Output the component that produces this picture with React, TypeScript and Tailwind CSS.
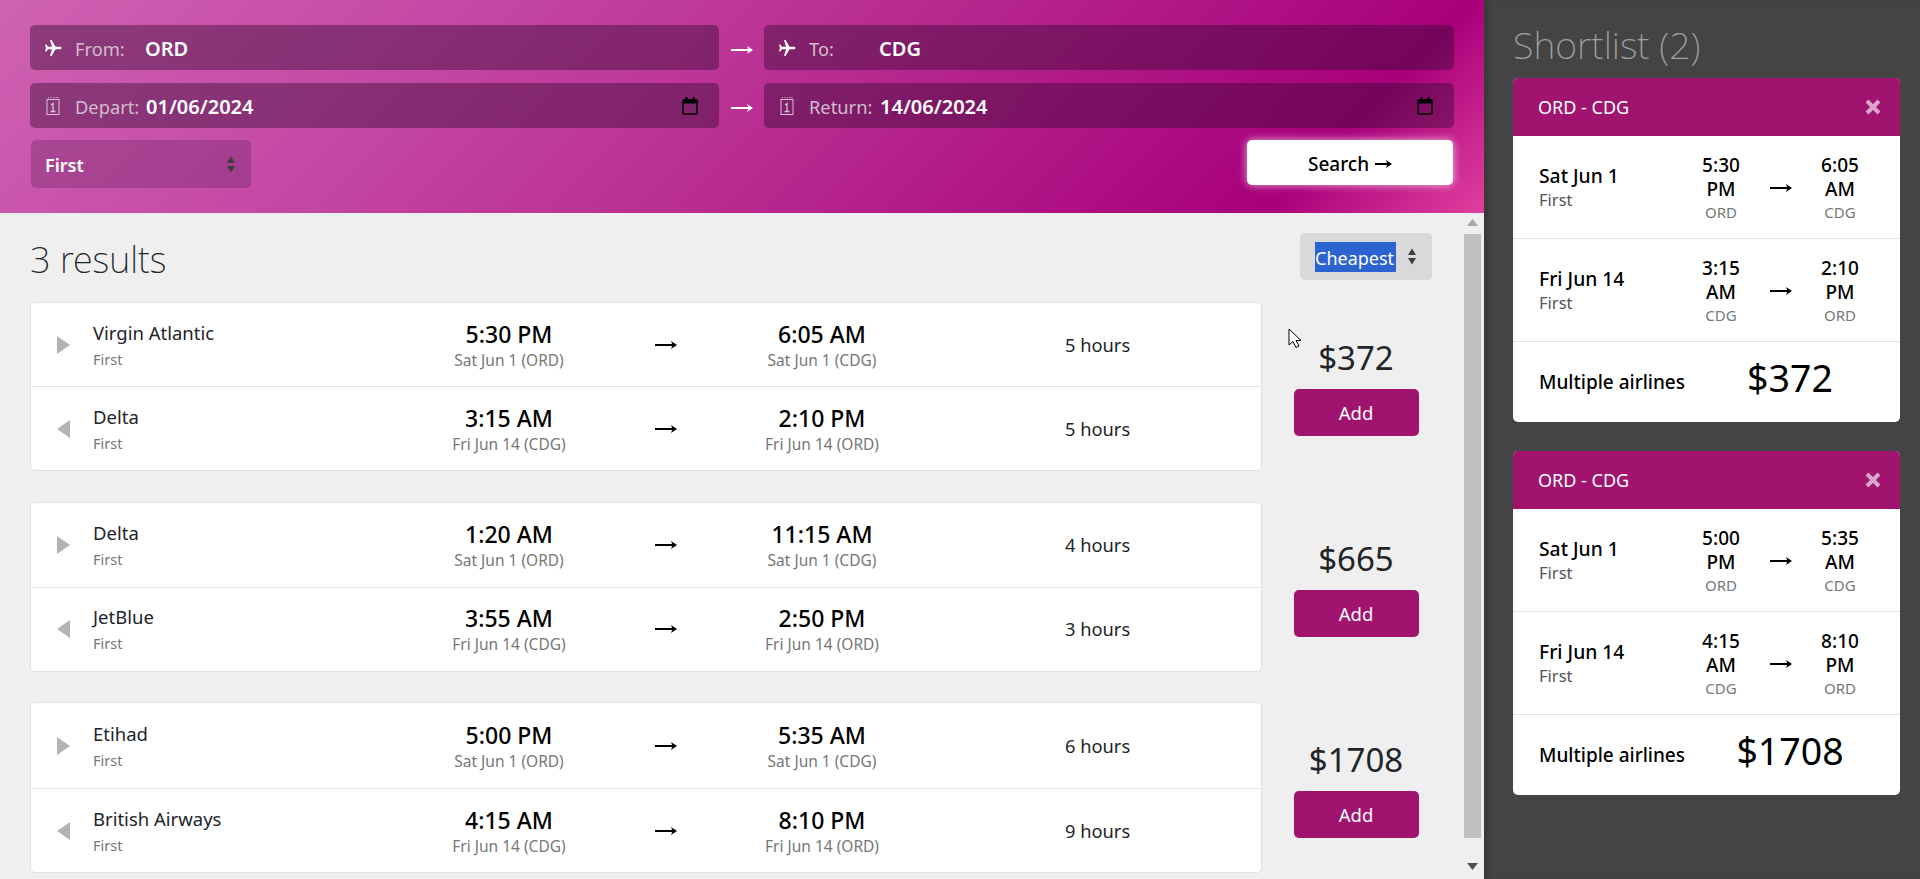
import React from "react";

function Arrow({ className = "", w = 22 }: { className?: string; w?: number }) {
  return (
    <svg width={w} height="12" viewBox={`0 0 ${w} 12`} className={className} fill="currentColor">
      <rect x="0" y="5" width={w - 3} height="2" />
      <path d={`M${w - 6} 2 L${w} 6 L${w - 6} 10 L${w - 4.5} 6 Z`} />
    </svg>
  );
}

function Plane() {
  return (
    <svg width="18" height="18" viewBox="0 0 18 18" className="text-white shrink-0" fill="currentColor">
      <path d="M17.5 9c0-.8-1-1.3-2-1.3h-4L7.6 1H6l2 6.7H4L2.3 5.6H1L2 9 1 12.4h1.3L4 10.3h4L6 17h1.6l3.900-6.700h4c1 0 2-.5 2-1.300z" />
    </svg>
  );
}

function CalGlyph() {
  return (
    <svg width="14" height="18" viewBox="0 0 14 18" className="text-[#d9c3d3] shrink-0" fill="none" stroke="currentColor">
      <rect x="1" y="2.5" width="12" height="15" strokeWidth="1" />
      <path d="M2.5 0v3M5 0v3M7.500 0v3M10 0v3M12 0v3" strokeWidth="1" strokeDasharray="1 1" />
      <path d="M5 8l2-1.500v8M4.500 14.500h5" strokeWidth="1.300" />
    </svg>
  );
}

function PickerIcon() {
  return (
    <svg width="16" height="18" viewBox="0 0 16 18" className="text-black shrink-0" fill="none">
      <rect x="1" y="3" width="14" height="14" rx="1" stroke="currentColor" strokeWidth="1.600" />
      <rect x="1" y="2.500" width="14" height="4" fill="currentColor" />
      <rect x="3.500" y="0" width="2" height="3" fill="currentColor" />
      <rect x="10.500" y="0" width="2" height="3" fill="currentColor" />
    </svg>
  );
}

function Sorter({ className = "" }: { className?: string }) {
  return (
    <svg width="10" height="19" viewBox="0 0 10 19" className={className} fill="currentColor">
      <path d="M5 1.500l4 6.500h-8zM5 17.500l-4-6.500h8z" />
    </svg>
  );
}

function Field({ icon, label, value, labelWidth, picker, size }: { icon: React.ReactNode; label: string; value: string; labelWidth: string; picker?: boolean; size: string }) {
  return (
    <div className={`${size} h-[45px] rounded-[5px] bg-[rgba(50,10,50,0.42)] flex items-center pl-[13px] pr-[21px]`}>
      <span className="w-[20px] flex justify-center mr-[12px]">{icon}</span>
      <span className={`${labelWidth} text-[18.300px] text-[#d3bccd] pt-[2px]`}>{label}</span>
      <span className="text-[20px] font-semibold text-white pt-[2px]">{value}</span>
      {picker && <span className="ml-auto pt-[1px]"><PickerIcon /></span>}
    </div>
  );
}

type Leg = { airline: string; dep: string; depDate: string; arr: string; arrDate: string; dur: string };
const results: { price: string; top: string; pad: string; legs: Leg[] }[] = [
  {
    price: "$372",
    top: "h-[83px]",
    pad: "pt-[34px]",
    legs: [
      { airline: "Virgin Atlantic", dep: "5:30 PM", depDate: "Sat Jun 1 (ORD)", arr: "6:05 AM", arrDate: "Sat Jun 1 (CDG)", dur: "5 hours" },
      { airline: "Delta", dep: "3:15 AM", depDate: "Fri Jun 14 (CDG)", arr: "2:10 PM", arrDate: "Fri Jun 14 (ORD)", dur: "5 hours" },
    ],
  },
  {
    price: "$665",
    top: "h-[84px]",
    pad: "pt-[35.500px]",
    legs: [
      { airline: "Delta", dep: "1:20 AM", depDate: "Sat Jun 1 (ORD)", arr: "11:15 AM", arrDate: "Sat Jun 1 (CDG)", dur: "4 hours" },
      { airline: "JetBlue", dep: "3:55 AM", depDate: "Fri Jun 14 (CDG)", arr: "2:50 PM", arrDate: "Fri Jun 14 (ORD)", dur: "3 hours" },
    ],
  },
  {
    price: "$1708",
    top: "h-[85px]",
    pad: "pt-[36px]",
    legs: [
      { airline: "Etihad", dep: "5:00 PM", depDate: "Sat Jun 1 (ORD)", arr: "5:35 AM", arrDate: "Sat Jun 1 (CDG)", dur: "6 hours" },
      { airline: "British Airways", dep: "4:15 AM", depDate: "Fri Jun 14 (CDG)", arr: "8:10 PM", arrDate: "Fri Jun 14 (ORD)", dur: "9 hours" },
    ],
  },
];

function LegRow({ leg, back, height }: { leg: Leg; back: boolean; height: string }) {
  return (
    <div className={`grid grid-cols-[62px_318px_196px_118px_194px_1fr] items-center ${height} ${back ? "border-t border-[#e2e2e2]" : ""}`}>
      <div className="flex pl-[26px]">
        <svg width="13" height="18" viewBox="0 0 13 18" className="text-[#b3b3b3]" fill="currentColor">
          {back ? <path d="M13 0v18L0 9z" /> : <path d="M0 0v18l13-9z" />}
        </svg>
      </div>
      <div>
        <div className="text-[18.500px] text-[#212529] leading-[24px]">{leg.airline}</div>
        <div className="text-[14.500px] text-[#777] leading-[20px] mt-[4px]">First</div>
      </div>
      <div className="text-center">
        <div className="text-[23px] font-medium text-black leading-[28px]">{leg.dep}</div>
        <div className="text-[15.500px] text-[#777] leading-[20px] mt-[2px]">{leg.depDate}</div>
      </div>
      <div className="flex justify-center text-black"><Arrow /></div>
      <div className="text-center">
        <div className="text-[23px] font-medium text-black leading-[28px]">{leg.arr}</div>
        <div className="text-[15.500px] text-[#777] leading-[20px] mt-[2px]">{leg.arrDate}</div>
      </div>
      <div className="pl-[146px] text-[18.300px] text-[#212529]">{leg.dur}</div>
    </div>
  );
}

function ResultCard({ r }: { r: (typeof results)[number] }) {
  return (
    <div className="flex items-start">
      <div className="w-[1232px] bg-white border border-[#e0e0e0] rounded-[5px]">
        <LegRow leg={r.legs[0]} back={false} height={r.top} />
        <LegRow leg={r.legs[1]} back={true} height="h-[84px]" />
      </div>
      <div className={`w-[188px] flex flex-col items-center ${r.pad}`}>
        <div className="text-[33px] text-[#212529] leading-[44px] mb-[9px]">{r.price}</div>
        <button className="w-[125px] h-[47px] rounded-[5px] bg-[#a0136e] text-white text-[18.500px]">Add</button>
      </div>
    </div>
  );
}

type SLeg = { date: string; dep: string; depCode: string; arr: string; arrCode: string };
const shortlist: { price: string; legs: SLeg[] }[] = [
  {
    price: "$372",
    legs: [
      { date: "Sat Jun 1", dep: "5:30 PM", depCode: "ORD", arr: "6:05 AM", arrCode: "CDG" },
      { date: "Fri Jun 14", dep: "3:15 AM", depCode: "CDG", arr: "2:10 PM", arrCode: "ORD" },
    ],
  },
  {
    price: "$1708",
    legs: [
      { date: "Sat Jun 1", dep: "5:00 PM", depCode: "ORD", arr: "5:35 AM", arrCode: "CDG" },
      { date: "Fri Jun 14", dep: "4:15 AM", depCode: "CDG", arr: "8:10 PM", arrCode: "ORD" },
    ],
  },
];

function SRow({ leg }: { leg: SLeg }) {
  return (
    <div className="h-[103px] border-b border-[#e2e2e2] grid grid-cols-[150px_64px_56px_62px] items-center pl-[26px] pt-[2px]">
      <div>
        <div className="text-[19.300px] font-medium text-black leading-[24px]">{leg.date}</div>
        <div className="text-[16.500px] text-[#555] leading-[24px]">First</div>
      </div>
      <div className="text-center">
        <div className="text-[19px] font-medium text-black leading-[24px]">{leg.dep}</div>
        <div className="text-[15px] text-[#777] leading-[22px]">{leg.depCode}</div>
      </div>
      <div className="flex justify-center text-black"><Arrow /></div>
      <div className="text-center">
        <div className="text-[19px] font-medium text-black leading-[24px]">{leg.arr}</div>
        <div className="text-[15px] text-[#777] leading-[22px]">{leg.arrCode}</div>
      </div>
    </div>
  );
}

function ShortCard({ s }: { s: (typeof shortlist)[number] }) {
  return (
    <div className="w-[387px] bg-white rounded-[5px] overflow-hidden">
      <div className="h-[58px] bg-[#a0136e] flex items-center justify-between pl-[25px] pr-[19px]">
        <span className="text-white text-[18px]">ORD - CDG</span>
        <svg width="16" height="16" viewBox="0 0 16 16" className="text-[#dba6cc]" fill="none" stroke="currentColor" strokeWidth="4">
          <path d="M2 2l12 12M14 2L2 14" />
        </svg>
      </div>
      <SRow leg={s.legs[0]} />
      <SRow leg={s.legs[1]} />
      <div className="h-[80px] flex items-center pl-[26px]">
        <div className="w-[186px] text-[19px] font-medium text-black pt-[1px]">Multiple airlines</div>
        <div className="w-[130px] text-center text-[37.500px] text-black mb-[7px]">{s.price}</div>
      </div>
    </div>
  );
}

export default function App() {
  return (
    <div className="flex w-[1920px] h-[879px] overflow-hidden font-['Noto_Sans',sans-serif]">
      <div className="w-[1484px] flex flex-col shrink-0">
        <header className="h-[213px] bg-[linear-gradient(135deg,#cf62b2_0%,#c64ba6_25%,#b82a90_55%,#a8007a_87%,#e0409f_100%)] px-[30px] pt-[25px]">
          <div className="flex items-center">
            <Field size="w-[689px] shrink-0" icon={<Plane />} label="From:" value="ORD" labelWidth="w-[70px]" />
            <Arrow className="mx-[11.500px] mt-[4px] text-white" />
            <Field size="flex-1" icon={<Plane />} label="To:" value="CDG" labelWidth="w-[70px]" />
          </div>
          <div className="flex items-center mt-[13px]">
            <Field size="w-[689px] shrink-0" icon={<CalGlyph />} label="Depart:" value="01/06/2024" labelWidth="w-[71px]" picker />
            <Arrow className="mx-[11.500px] mt-[4px] text-white" />
            <Field size="flex-1" icon={<CalGlyph />} label="Return:" value="14/06/2024" labelWidth="w-[71px]" picker />
          </div>
          <div className="flex justify-between items-start mt-[12px]">
            <div className="ml-[1px] w-[220px] h-[48px] rounded-[5px] bg-[rgba(90,30,90,0.3)] flex items-center justify-between pl-[14px] pr-[15px]">
              <span className="text-white font-semibold text-[18px] pt-[3px]">First</span>
              <Sorter className="text-[#3d3d3d]" />
            </div>
            <button className="mr-[1px] w-[206px] h-[45px] rounded-[5px] bg-white shadow-[0_0_8px_rgba(255,255,255,0.7)] flex items-center justify-center gap-[6px] text-black text-[19px] font-medium">
              <span className="pt-[3px]">Search</span> <Arrow w={17} className="mt-[2px]" />
            </button>
          </div>
        </header>

        <div className="flex-1 flex bg-[#efefef] min-h-0">
          <main className="w-[1464px] pl-[30px] pt-[20px]">
            <div className="flex items-center justify-between w-[1402px] h-[47px]">
              <h1 className="text-[36px] font-extralight text-[#212529] pt-[6px]">3 results</h1>
              <div className="w-[132px] h-[47px] rounded-[5px] bg-[#d9d9d9] flex items-center pl-[15px] pr-[15px] justify-between">
                <span className="bg-[#2b63d0] text-white text-[18px] leading-[33px] h-[30px] w-[81px] overflow-hidden whitespace-nowrap">Cheapest</span>
                <Sorter className="text-[#3d3d3d]" />
              </div>
            </div>
            <div className="flex flex-col gap-[30.500px] mt-[22px]">
              {results.map((r) => (
                <ResultCard key={r.price} r={r} />
              ))}
            </div>
          </main>
          <div className="w-[20px] flex flex-col items-center pr-[3px]">
            <svg width="11" height="7" viewBox="0 0 11 7" className="mt-[6px] text-[#a6a6a6]" fill="currentColor"><path d="M5.500 0L11 7H0z" /></svg>
            <div className="w-[17px] h-[604px] bg-[#c0c0c0] mt-[8px]" />
            <svg width="11" height="7" viewBox="0 0 11 7" className="mt-[25px] text-[#505050]" fill="currentColor"><path d="M5.500 7L11 0H0z" /></svg>
          </div>
        </div>
      </div>

      <aside className="w-[436px] bg-[#444444] pl-[29px] shadow-[inset_8px_0_8px_-6px_rgba(0,0,0,0.25)]">
        <h2 className="text-[37.500px] font-extralight text-[#a0a0a0] h-[78px] flex items-center pt-[12px]">Shortlist (2)</h2>
        <div className="flex flex-col gap-[29px]">
          {shortlist.map((s) => (
            <ShortCard key={s.price} s={s} />
          ))}
        </div>
      </aside>

      <svg width="14" height="22" viewBox="0 0 14 22" className="absolute left-[1288px] top-[328px]" fill="#fff" stroke="#000" strokeWidth="1">
        <path d="M1 1v16l4-3.500 3 6 3-1.500-3-5.500h5z" />
      </svg>
    </div>
  );
}
